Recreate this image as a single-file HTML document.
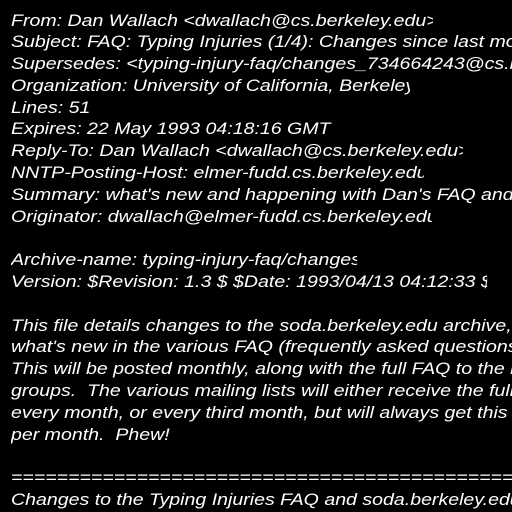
<!DOCTYPE html>
<html><head><style>
html,body{margin:0;background:#000;width:512px;height:512px;overflow:hidden}
body{padding:9.5px 0 0 11px;box-sizing:border-box;font-family:"Liberation Sans",sans-serif;font-style:italic;font-size:17px;line-height:21.8px;color:#fff}
#w{transform:scaleX(1.15);transform-origin:0 0;width:436px;overflow:hidden}
#w div{white-space:pre;overflow:hidden;height:21.8px}
</style></head><body><div id="w">
<div style="width:367px">From: Dan Wallach &lt;dwallach@cs.berkeley.edu&gt;</div>
<div>Subject: FAQ: Typing Injuries (1/4): Changes since last month</div>
<div>Supersedes: &lt;typing-injury-faq/changes_734664243@cs.berkeley.edu&gt;</div>
<div style="width:347px">Organization: University of California, Berkeley</div>
<div>Lines: 51</div>
<div>Expires: 22 May 1993 04:18:16 GMT</div>
<div style="width:393px">Reply-To: Dan Wallach &lt;dwallach@cs.berkeley.edu&gt;</div>
<div style="width:359px">NNTP-Posting-Host: elmer-fudd.cs.berkeley.edu</div>
<div>Summary: what's new and happening with Dan's FAQ and stuff</div>
<div style="width:366px">Originator: dwallach@elmer-fudd.cs.berkeley.edu</div>
<div> </div>
<div style="width:301px">Archive-name: typing-injury-faq/changes</div>
<div style="width:414px">Version: $Revision: 1.3 $ $Date: 1993/04/13 04:12:33 $</div>
<div> </div>
<div>This file details changes to the soda.berkeley.edu archive, and</div>
<div>what's new in the various FAQ (frequently asked questions) lists.</div>
<div>This will be posted monthly, along with the full FAQ to the news</div>
<div>groups.  The various mailing lists will either receive the full FAQ</div>
<div>every month, or every third month, but will always get this file</div>
<div>per month.  Phew!</div>
<div> </div>
<div>==========================================================</div>
<div>Changes to the Typing Injuries FAQ and soda.berkeley.edu</div>
</div></body></html>
